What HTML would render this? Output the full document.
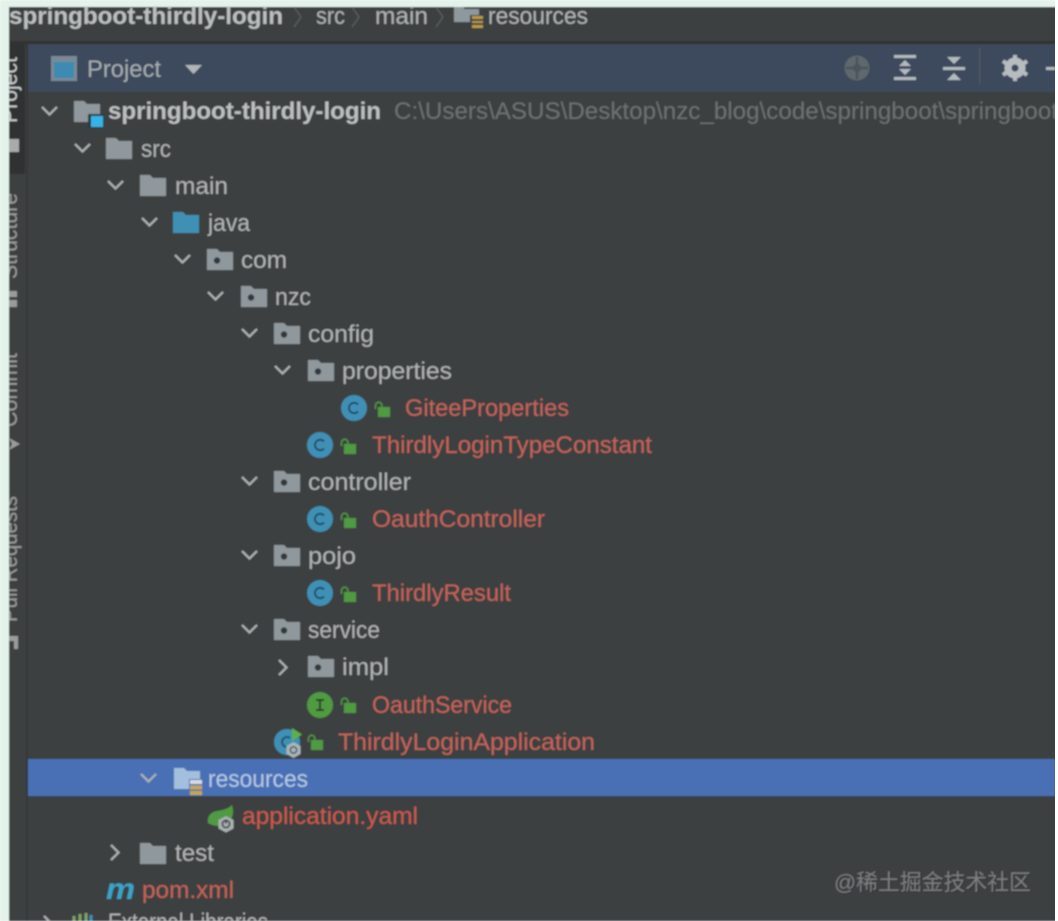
<!DOCTYPE html>
<html><head><meta charset="utf-8">
<style>
html,body{margin:0;padding:0;background:#fff;width:1058px;height:921px;overflow:hidden}
svg{display:block;position:absolute;left:0;top:0}
text{font-family:"Liberation Sans","Noto Sans CJK SC",sans-serif;font-size:24px}
.w{fill:#b0b4b4}.r{fill:#c4635a}.b{fill:#bcc0c0;font-weight:bold}.g{fill:#6c7171}
.ch{fill:none;stroke:#aeb2b2;stroke-width:2.2}
.f{fill:#8f989c}.d{fill:#33383b}
.c{fill:#3f8fb5}.ci{fill:none;stroke:#1e4a62;stroke-width:1.800}
.l{fill:#4f9a42}.ls{fill:none;stroke:#4f9a42;stroke-width:1.500}
</style></head><body>
<svg width="1058" height="921" viewBox="0 0 1058 921" xmlns="http://www.w3.org/2000/svg">
<defs>
<filter id="bl" x="-2%" y="-2%" width="104%" height="104%"><feGaussianBlur stdDeviation="0.7"/></filter>
<clipPath id="side"><rect x="9" y="44" width="18" height="877"/></clipPath>
<g id="fd"><path class="f" d="M0 0h10l3 3h13v18H0z"/></g>
<g id="pk"><path class="f" d="M0 0h10l3 3h13v18H0z"/><circle class="d" cx="10" cy="11.500" r="3.200"/></g>
<g id="dn"><path class="ch" d="M0 0l7.500 7.500L15 0"/></g>
<g id="rt"><path class="ch" d="M0 0l7.500 7.500L0 15"/></g>
<g id="cl"><circle class="c" cx="13" cy="13" r="13"/><path class="ci" d="M17 9.500a5.200 5.200 0 1 0 0 7"/></g>
<g id="lk"><path class="l" d="M4 6h12v10H4z"/><path class="ls" d="M1.500 8V4.500a3.200 3.200 0 0 1 6.400 0V6"/></g>
</defs>
<g filter="url(#bl)">
<rect x="0" y="0" width="1058" height="921" fill="#3d3f40"/>
<rect x="0" y="0" width="1058" height="7" fill="#e3f2ea"/>
<rect x="0" y="0" width="9" height="921" fill="#e3f2ea"/>
<rect x="9" y="41" width="1046" height="3" fill="#303233"/>

<!-- breadcrumb -->
<text class="b" x="9" y="24" textLength="274" lengthAdjust="spacingAndGlyphs">springboot-thirdly-login</text>
<path d="M294 7l7 10-7 10M352 7l7 10-7 10M436 7l7 10-7 10" fill="none" stroke="#5b5e5f" stroke-width="1.300"/>
<text class="w" x="316" y="24" textLength="29" lengthAdjust="spacingAndGlyphs">src</text>
<text class="w" x="375" y="24" textLength="53" lengthAdjust="spacingAndGlyphs">main</text>
<path d="M454 7h10v2h15v13h-25z" fill="#8f989c"/>
<path d="M470 15h14v14h-14z" fill="#3d3f40"/>
<path d="M472 16h11v3h-11zM472 21h11v2h-11zM472 25h11v3h-11z" fill="#b99a48"/>
<text class="w" x="488" y="24" textLength="100" lengthAdjust="spacingAndGlyphs">resources</text>

<!-- sidebar -->
<rect x="9" y="44" width="18" height="877" fill="#3c3f41"/>
<rect x="9" y="44" width="16" height="130" fill="#2e3032"/>
<rect x="26" y="44" width="2" height="877" fill="#343638"/>
<g clip-path="url(#side)">
<text transform="translate(17 123) rotate(-90)" textLength="66" lengthAdjust="spacingAndGlyphs" style="font-size:22px;fill:#c8cccc">Project</text>
<text transform="translate(17 279) rotate(-90)" textLength="86" lengthAdjust="spacingAndGlyphs" style="font-size:22px;fill:#989c9c">Structure</text>
<text transform="translate(17 427) rotate(-90)" textLength="74" lengthAdjust="spacingAndGlyphs" style="font-size:22px;fill:#989c9c">Commit</text>
<text transform="translate(17 622) rotate(-90)" textLength="126" lengthAdjust="spacingAndGlyphs" style="font-size:22px;fill:#989c9c">Pull Requests</text>
</g>
<rect x="9" y="139" width="10" height="13" fill="#a7abab"/>
<path d="M9 291h8v6H9zM9 300h8v7H9z" fill="#989c9c"/>
<path d="M9 438l11 6-11 6 3-6z" fill="#989c9c"/>
<path d="M9 636h9v13h-4v-8H9z" fill="#989c9c"/>

<!-- tool header -->
<rect x="28" y="44" width="1027" height="48" fill="#3c4a5b"/>
<rect x="51" y="56" width="26" height="25" fill="#788a96"/>
<rect x="54" y="62" width="20" height="16" fill="#3c8ab2"/>
<text x="87" y="77" textLength="74" lengthAdjust="spacingAndGlyphs" style="fill:#a4abb0">Project</text>
<path d="M185 65h17l-8.500 9z" fill="#b0b6ba"/>
<circle cx="857" cy="68" r="12.500" fill="#5f676d"/>
<path d="M857 57v22M846 68h22" stroke="#4c555c" stroke-width="2.500"/>
<circle cx="857" cy="68" r="4" fill="#4c555c"/>
<g fill="#b2bac0">
<path d="M894 55h22v3h-22zM894 77h22v3h-22zM899 66l6-6 6 6zM899 69h12l-6 6z"/>
<path d="M943 67h22v3h-22zM947 57h14l-7 7zM954 73l7 7h-14z"/>
</g>
<rect x="979" y="48" width="1.500" height="36" fill="#4d5a66"/>
<circle cx="1015" cy="68" r="7" fill="none" stroke="#b6bcc0" stroke-width="7"/>
<path d="M1015 55v5M1015 76v5M1003 61l4 3M1023 72l4 3M1003 75l4-3M1023 64l4-3" stroke="#b6bcc0" stroke-width="4"/>
<rect x="1046" y="67" width="9" height="3" fill="#b2bac0"/>

<!-- selection -->
<rect x="28" y="759" width="1027" height="37" fill="#4a6fb5"/>

<!-- tree: root -->
<use href="#dn" x="42" y="107"/>
<g transform="translate(74 101)"><path class="f" d="M0 0h10l3 3h13v18H0z"/><rect x="14" y="13" width="16" height="14" fill="#2c3a44"/><rect x="17" y="15" width="12" height="11" fill="#35b4e8"/></g>
<text class="b" x="108" y="119" textLength="273" lengthAdjust="spacingAndGlyphs">springboot-thirdly-login</text>
<text class="g" x="394" y="119" textLength="664" lengthAdjust="spacingAndGlyphs">C:\Users\ASUS\Desktop\nzc_blog\code\springboot\springboot</text>

<!-- src -->
<use href="#dn" x="75" y="144"/><use href="#fd" x="106" y="138"/>
<text class="w" x="141" y="157" textLength="30" lengthAdjust="spacingAndGlyphs">src</text>
<!-- main -->
<use href="#dn" x="108" y="181"/><use href="#fd" x="140" y="175"/>
<text class="w" x="175" y="194" textLength="53" lengthAdjust="spacingAndGlyphs">main</text>
<!-- java -->
<use href="#dn" x="142" y="218"/><path fill="#3f8fb5" d="M173 212h10l3 3h13v18h-26z"/>
<text class="w" x="208" y="231" textLength="42" lengthAdjust="spacingAndGlyphs">java</text>
<!-- com -->
<use href="#dn" x="175" y="255"/><use href="#pk" x="207" y="249"/>
<text class="w" x="241" y="268" textLength="46" lengthAdjust="spacingAndGlyphs">com</text>
<!-- nzc -->
<use href="#dn" x="208" y="292"/><use href="#pk" x="241" y="286"/>
<text class="w" x="275" y="305" textLength="36" lengthAdjust="spacingAndGlyphs">nzc</text>
<!-- config -->
<use href="#dn" x="242" y="329"/><use href="#pk" x="274" y="323"/>
<text class="w" x="308" y="342" textLength="66" lengthAdjust="spacingAndGlyphs">config</text>
<!-- properties -->
<use href="#dn" x="275" y="366"/><use href="#pk" x="308" y="360"/>
<text class="w" x="342" y="379" textLength="110" lengthAdjust="spacingAndGlyphs">properties</text>
<!-- GiteeProperties -->
<use href="#cl" x="341" y="395"/><use href="#lk" x="374" y="401"/>
<text class="r" x="405" y="416" textLength="164" lengthAdjust="spacingAndGlyphs">GiteeProperties</text>
<!-- ThirdlyLoginTypeConstant -->
<use href="#cl" x="307" y="432"/><use href="#lk" x="340" y="438"/>
<text class="r" x="372" y="453" textLength="280" lengthAdjust="spacingAndGlyphs">ThirdlyLoginTypeConstant</text>
<!-- controller -->
<use href="#dn" x="242" y="477"/><use href="#pk" x="274" y="471"/>
<text class="w" x="308" y="490" textLength="103" lengthAdjust="spacingAndGlyphs">controller</text>
<!-- OauthController -->
<use href="#cl" x="307" y="506"/><use href="#lk" x="340" y="512"/>
<text class="r" x="372" y="527" textLength="173" lengthAdjust="spacingAndGlyphs">OauthController</text>
<!-- pojo -->
<use href="#dn" x="242" y="551"/><use href="#pk" x="274" y="545"/>
<text class="w" x="308" y="564" textLength="48" lengthAdjust="spacingAndGlyphs">pojo</text>
<!-- ThirdlyResult -->
<use href="#cl" x="307" y="580"/><use href="#lk" x="340" y="586"/>
<text class="r" x="372" y="601" textLength="139" lengthAdjust="spacingAndGlyphs">ThirdlyResult</text>
<!-- service -->
<use href="#dn" x="242" y="625"/><use href="#pk" x="274" y="619"/>
<text class="w" x="308" y="638" textLength="72" lengthAdjust="spacingAndGlyphs">service</text>
<!-- impl -->
<use href="#rt" x="279" y="660"/><use href="#pk" x="308" y="656"/>
<text class="w" x="342" y="675" textLength="47" lengthAdjust="spacingAndGlyphs">impl</text>
<!-- OauthService -->
<circle cx="320" cy="705" r="13" fill="#4f9a42"/>
<path d="M316 700h8M316 710h8M320 700v10" stroke="#243a20" stroke-width="1.800" fill="none"/>
<use href="#lk" x="340" y="697"/>
<text class="r" x="372" y="713" textLength="140" lengthAdjust="spacingAndGlyphs">OauthService</text>
<!-- ThirdlyLoginApplication -->
<circle cx="287" cy="742" r="13" fill="#3f8fb5"/>
<path d="M290 738a5 5 0 1 0 0 8" fill="none" stroke="#1e4a62" stroke-width="1.800"/>
<path d="M292 728l10 6.500-10 6.500z" fill="#5db048"/>
<path d="M293.500 742l7 4v8l-7 4-7-4v-8z" fill="#a9b4b8"/>
<circle cx="293.500" cy="750" r="3.200" fill="none" stroke="#3d5560" stroke-width="1.400"/>
<use href="#lk" x="307" y="734"/>
<text class="r" x="338" y="750" textLength="257" lengthAdjust="spacingAndGlyphs">ThirdlyLoginApplication</text>
<!-- resources -->
<use href="#dn" x="141" y="774"/>
<g transform="translate(174 768)"><path fill="#a3bfdc" d="M0 0h10l3 3h13v18H0z"/><path fill="#4a6fb5" d="M15 11h14v17H15z"/><path d="M16 12h12v4H16z" fill="#d8dce0"/><path d="M16 17.500h12v4H16zM16 23h12v4H16z" fill="#c5a74f"/></g>
<text x="208" y="787" textLength="100" lengthAdjust="spacingAndGlyphs" style="fill:#b6c9e2">resources</text>
<!-- application.yaml -->
<path d="M208 823c-1-7 3-11 9-12 6-1 11-2 15-6 2 7 1 13-3 17-6 5-15 5-21 1z" fill="#4f9a42"/>
<path d="M226 816l7.500 4v8.500l-7.500 4-7.500-4V820z" fill="#a9b0b2"/>
<circle cx="226" cy="824" r="3.600" fill="none" stroke="#3d3f40" stroke-width="1.600"/>
<path d="M226 819.500v4" stroke="#3d3f40" stroke-width="1.600"/>
<text class="r" x="242" y="824" textLength="176" lengthAdjust="spacingAndGlyphs" style="fill:#cc5a4d">application.yaml</text>
<!-- test -->
<use href="#rt" x="111" y="845"/><use href="#fd" x="140" y="843"/>
<text class="w" x="175" y="861" textLength="39" lengthAdjust="spacingAndGlyphs">test</text>
<!-- pom -->
<text x="106" y="899" textLength="29" lengthAdjust="spacingAndGlyphs" style="font-weight:bold;font-style:italic;font-size:30px;fill:#3aa3c8">m</text>
<text class="r" x="142" y="898" textLength="92" lengthAdjust="spacingAndGlyphs">pom.xml</text>
<!-- external -->
<use href="#rt" x="44" y="916"/>
<path d="M74 921v-5M80 921v-7M86 921v-8" stroke="#7fa06a" stroke-width="3"/>
<path d="M91 921v-6" stroke="#3f8fb5" stroke-width="3"/>
<text class="w" x="108" y="930" textLength="160" lengthAdjust="spacingAndGlyphs">External Libraries</text>

<!-- watermark -->
<text x="835" y="891" textLength="197" lengthAdjust="spacingAndGlyphs" style="fill:#222426;opacity:.6;font-size:22px">@稀土掘金技术社区</text>
<text x="834" y="890" textLength="197" lengthAdjust="spacingAndGlyphs" style="fill:#7b7e80;font-size:22px">@稀土掘金技术社区</text>
</g>
<rect x="1055" y="0" width="3" height="921" fill="#fff"/>
</svg>
</body></html>
